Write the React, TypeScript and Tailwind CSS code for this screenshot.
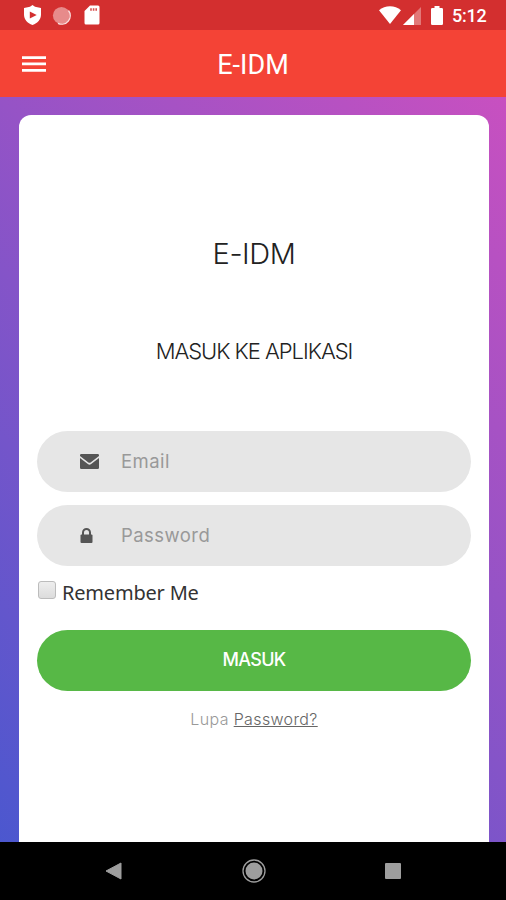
import type { ReactNode } from "react";

const StatusBar = () => (
  <div className="flex h-[30px] shrink-0 items-center justify-between bg-[#d32f2f] pl-[23px] pr-[19px] text-white">
    <div className="flex items-center">
      <svg width="19" height="20" viewBox="0 0 19 20">
        <path d="M9.500 0 12 1.800 18 3v6.500c0 5-3.400 8.800-8.500 10.500C4.400 18.300 1 14.500 1 9.500V3l6-1.200z" fill="white" />
        <path d="M6.800 6.600v7l6.900-3.500z" fill="#d32f2f" />
      </svg>
      <svg width="19" height="19" viewBox="0 0 19 19" className="ml-[10px]">
        <circle cx="9.500" cy="9.500" r="8.600" fill="#e78b8b" />
        <path d="M16.500 4.500A8.500 8.500 0 0 1 6 17.300" fill="none" stroke="#fbe4e4" strokeWidth="1.300" />
      </svg>
      <svg width="16" height="20" viewBox="0 0 16 20" className="ml-[13px]">
        <path d="M6 .5h8A1.500 1.500 0 0 1 15.500 2v16a1.500 1.500 0 0 1-1.500 1.500H2A1.500 1.500 0 0 1 .5 18V6z" fill="white" />
        <path d="M6.200 3.300h1.600v2.500H6.200zM8.800 3.300h1.600v2.500H8.800zM11.400 3.300H13v2.500h-1.600z" fill="#d9504f" />
      </svg>
    </div>
    <div className="flex items-center">
      <svg width="22" height="18" viewBox="0 0 22 18">
        <path d="M0 4.200C6-1.200 16-1.200 22 4.200L11 18z" fill="white" />
      </svg>
      <svg width="18" height="18" viewBox="0 0 18 18" className="ml-[2px] mt-px">
        <path d="M18 0v18H0z" fill="#e27878" />
        <path d="M11 7v11H0z" fill="white" />
      </svg>
      <svg width="12" height="19" viewBox="0 0 12 19" className="ml-[10px]">
        <path d="M3.500 0h5v2H10.700A1.300 1.300 0 0 1 12 3.300V17.700A1.300 1.300 0 0 1 10.700 19H1.300A1.300 1.300 0 0 1 0 17.700V3.300A1.300 1.300 0 0 1 1.300 2H3.500z" fill="white" />
      </svg>
      <span className="ml-[9px] mt-[2px] w-[35px] whitespace-nowrap font-['Roboto',sans-serif] text-[18px] font-medium leading-none tracking-[-0.2px]">5:12</span>
    </div>
  </div>
);

const AppBar = () => (
  <header className="grid h-[67px] shrink-0 grid-cols-[1fr_auto_1fr] items-center bg-[#f44336] px-[22px] text-white">
    <button type="button" aria-label="Menu">
      <svg width="24" height="16" viewBox="0 0 24 16" fill="white">
        <path d="M0 .2h24v2.700H0zM0 6.600h24v2.700H0zM0 13h24v2.700H0z" />
      </svg>
    </button>
    <h1 className="mt-[4px] font-['Roboto',sans-serif] text-[27px] font-normal leading-none">E-IDM</h1>
  </header>
);

const Field = ({ icon, type, label }: { icon: ReactNode; type: string; label: string }) => (
  <label className="flex h-[61px] items-center rounded-full bg-[#e6e6e6] pl-[43px] pr-8">
    <span className="w-[41px] shrink-0">{icon}</span>
    <input
      type={type}
      placeholder={label}
      className="w-full min-w-0 bg-transparent font-['Inter',sans-serif] text-[18.5px] tracking-[0.45px] text-[#666666] outline-none placeholder:text-[#999999]"
    />
  </label>
);

const MailIcon = () => (
  <svg width="19" height="15" viewBox="0 0 19 15" fill="#555555">
    <path d="M1.300 0h16.400A1.300 1.300 0 0 1 19 1.300v.8L10.600 8.400q-1.100.8-2.200 0L0 2.100v-.8A1.300 1.300 0 0 1 1.300 0z" />
    <path d="M0 4.100 8.200 10.300q1.300.9 2.600 0L19 4.100v9.600a1.300 1.300 0 0 1-1.300 1.300H1.300A1.300 1.300 0 0 1 0 13.700z" />
  </svg>
);

const LockIcon = () => (
  <svg width="13" height="15" viewBox="0 0 13 15">
    <path d="M3 7V4.500a3.500 3.500 0 0 1 7 0V7" fill="none" stroke="#555555" strokeWidth="2" />
    <rect x="0.500" y="6.500" width="12" height="8.500" rx="1" fill="#555555" />
  </svg>
);

const LoginCard = () => (
  <main className="flex flex-1 flex-col rounded-t-[12px] bg-white px-[18px] font-['Inter',sans-serif]">
    <h2 className="mt-[120px] text-center text-[29px] font-light leading-[38px] tracking-[-0.4px] text-[#222222]">E-IDM</h2>
    <h3 className="mt-[63px] text-center text-[22px] font-light leading-[30px] tracking-[-1.03px] text-[#222222]">MASUK KE APLIKASI</h3>
    <form className="mt-[65px] flex flex-col" onSubmit={(e) => e.preventDefault()}>
      <div className="flex flex-col gap-[13px]">
        <Field icon={<MailIcon />} type="email" label="Email" />
        <Field icon={<LockIcon />} type="password" label="Password" />
      </div>
      <label className="mt-[13px] flex h-[27px] items-center text-[20px] text-[#333333]">
        <input
          type="checkbox"
          className="mb-[6px] ml-[1px] size-[18px] shrink-0 appearance-none rounded-[3px] border border-[#bcbcbc] bg-linear-to-b from-[#eeeeee] to-[#dcdcdc]"
        />
        <span className="ml-[6px] font-['Noto_Sans',sans-serif] leading-[27px] tracking-[-0.2px]">Remember Me</span>
      </label>
      <button type="submit" className="mt-[24px] h-[61px] rounded-full bg-[#57b846] pb-[2px] text-[18px] font-medium tracking-[-0.7px] text-white">
        MASUK
      </button>
    </form>
    <p className="mt-[16px] text-center text-[16px] font-light leading-[24px] tracking-[0.37px] text-[#999999]">
      Lupa <a href="#" className="text-[#666666] underline">Password?</a>
    </p>
  </main>
);

const NavBar = () => (
  <nav className="flex h-[58px] shrink-0 items-center justify-between bg-black pl-[105px] pr-[105px]">
    <svg width="17" height="18" viewBox="0 0 17 18">
      <path d="M16 1v16L1 9z" fill="#9e9e9e" stroke="#9e9e9e" strokeLinejoin="round" />
    </svg>
    <svg width="24" height="24" viewBox="0 0 24 24">
      <circle cx="12" cy="12" r="11" fill="none" stroke="#9e9e9e" strokeWidth="1.300" />
      <circle cx="12" cy="12" r="8.500" fill="#9e9e9e" />
    </svg>
    <span className="size-4 rounded-[1px] bg-[#9e9e9e]" />
  </nav>
);

const App = () => (
  <div className="flex h-[900px] w-[506px] flex-col overflow-hidden">
    <StatusBar />
    <AppBar />
    <div className="flex min-h-0 flex-1 bg-[linear-gradient(-135deg,#c850c0,#4158d0)] bg-[length:100%_850px] bg-no-repeat pl-[19px] pr-[17px] pt-[18px]">
      <LoginCard />
    </div>
    <NavBar />
  </div>
);

export default App;
